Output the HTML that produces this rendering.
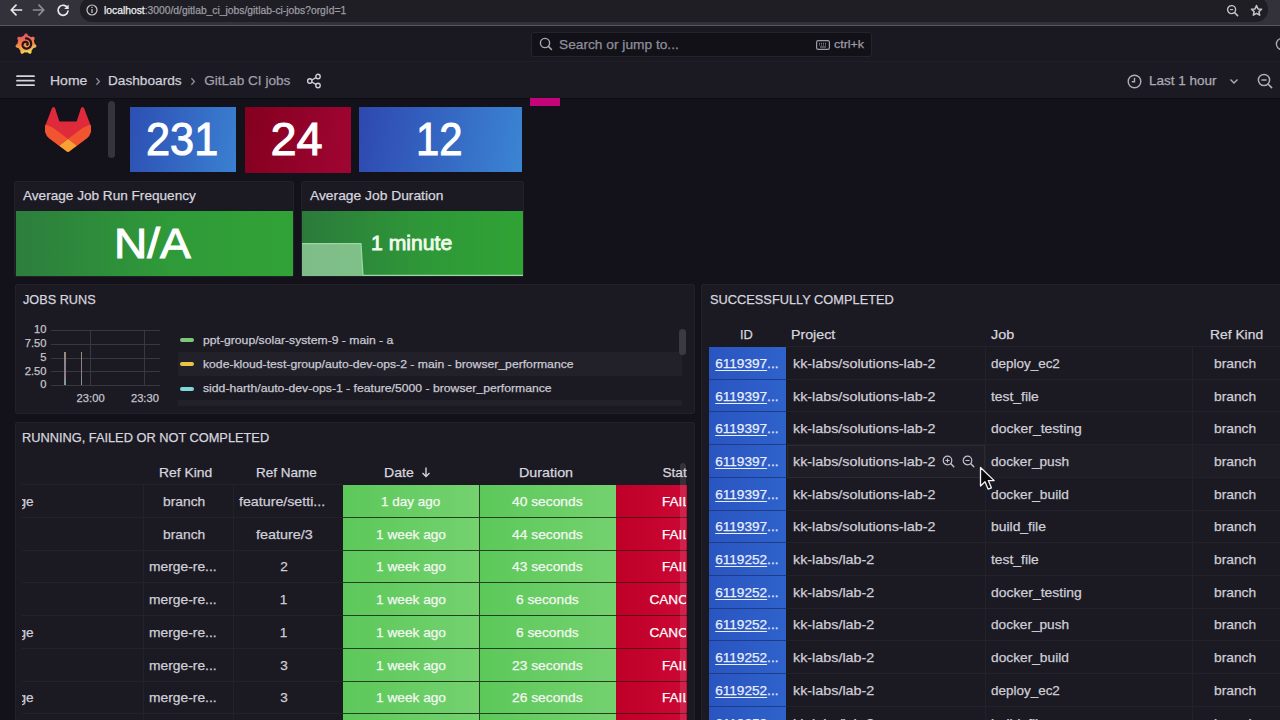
<!DOCTYPE html>
<html><head><meta charset="utf-8"><style>
html,body{margin:0;padding:0;width:1280px;height:720px;overflow:hidden;background:#13121a;font-family:"Liberation Sans", sans-serif}
div,svg{position:absolute}
.t{white-space:pre;-webkit-text-stroke:0.25px currentColor}
.t span{position:static}
</style></head><body>
<div style="left:0.00px;top:0.00px;width:1280px;height:25px;background:#33323a"></div>
<div style="left:0.00px;top:25.00px;width:1280px;height:1px;background:#58575f"></div>
<div style="left:80.00px;top:-3.00px;width:1188px;height:25px;background:#1f1e24;border-radius:12px"></div>
<svg style="left:9.00px;top:3.00px" width="14" height="14" viewBox="0 0 14 14"><path d="M12.5 7H2.5M7 2.2L2.2 7L7 11.8" stroke="#e8e8ea" stroke-width="1.7" fill="none" stroke-linecap="round" stroke-linejoin="round"/></svg>
<svg style="left:32.00px;top:3.00px" width="14" height="14" viewBox="0 0 14 14"><path d="M1.5 7H11.5M7 2.2L11.8 7L7 11.8" stroke="#8e8d95" stroke-width="1.7" fill="none" stroke-linecap="round" stroke-linejoin="round"/></svg>
<svg style="left:56.00px;top:3.00px" width="14" height="14" viewBox="0 0 14 14"><path d="M11.6 5.2A5 5 0 1 0 12 8" stroke="#e8e8ea" stroke-width="1.7" fill="none" stroke-linecap="round"/><path d="M12.6 1.6V6H8.2Z" fill="#e8e8ea"/></svg>
<svg style="left:86.00px;top:4.00px" width="12" height="12" viewBox="0 0 12 12"><circle cx="6" cy="6" r="5" stroke="#c8c8cc" stroke-width="1.2" fill="none"/><rect x="5.4" y="5" width="1.2" height="4" fill="#c8c8cc"/><rect x="5.4" y="2.8" width="1.2" height="1.2" fill="#c8c8cc"/></svg>
<div class="t" style="left:103.60px;top:3.38px;font-size:10.6px;line-height:14.84px;color:#9d9ca4;"><span style="display:inline-block;transform:scaleX(0.9734);transform-origin:0 50%"><span style="color:#f0f0f2">localhost</span>:3000/d/gitlab_ci_jobs/gitlab-ci-jobs?orgId=1</span></div>
<svg style="left:1226.00px;top:4.00px" width="14" height="14" viewBox="0 0 14 14"><circle cx="5.6" cy="5.6" r="4" stroke="#c4c4c8" stroke-width="1.4" fill="none"/><path d="M8.5 8.5L11.6 11.6" stroke="#c4c4c8" stroke-width="1.6" stroke-linecap="round"/><path d="M4 5.6H7.2" stroke="#c4c4c8" stroke-width="1.1"/></svg>
<svg style="left:1250.00px;top:4.00px" width="13" height="13" viewBox="0 0 13 13"><path d="M6.5 1.5L8 4.9L11.6 5.2L8.9 7.6L9.7 11.2L6.5 9.3L3.3 11.2L4.1 7.6L1.4 5.2L5 4.9Z" stroke="#c4c4c8" stroke-width="1.5" fill="none" stroke-linejoin="round"/></svg>
<div style="left:0.00px;top:26.00px;width:1280px;height:35px;background:#1a1921"></div>
<div style="left:0.00px;top:61.00px;width:1280px;height:1px;background:#211f29"></div>
<svg style="left:14.00px;top:32.00px" width="24" height="24" viewBox="0 0 24 24"><defs><linearGradient id="gg" x1="0.2" y1="0" x2="0.45" y2="1"><stop offset="0" stop-color="#e2456a"/><stop offset="0.5" stop-color="#f0804a"/><stop offset="1" stop-color="#f4d658"/></linearGradient></defs>
<path fill="url(#gg)" d="M21.00 12.00L21.52 12.43L21.96 12.90L22.28 13.39L22.45 13.90L22.43 14.38L22.23 14.82L21.87 15.21L21.36 15.51L20.76 15.74L20.11 15.90L19.48 16.02L19.29 16.35L19.09 16.68L18.87 16.99L18.64 17.29L18.39 17.59L18.14 17.87L17.87 18.14L17.59 18.39L17.61 19.04L17.60 19.71L17.51 20.35L17.32 20.91L17.03 21.35L16.64 21.64L16.17 21.76L15.65 21.71L15.09 21.51L14.53 21.18L14.00 20.77L13.52 20.35L13.14 20.41L12.76 20.46L12.38 20.48L12.00 20.49L11.62 20.48L11.24 20.46L10.86 20.41L10.48 20.35L10.00 20.77L9.47 21.18L8.91 21.51L8.35 21.71L7.83 21.76L7.36 21.64L6.97 21.35L6.68 20.91L6.49 20.35L6.40 19.71L6.39 19.04L6.41 18.39L6.13 18.14L5.86 17.87L5.61 17.59L5.36 17.29L5.13 16.99L4.91 16.68L4.71 16.35L4.52 16.02L3.89 15.90L3.24 15.74L2.64 15.51L2.13 15.21L1.77 14.82L1.57 14.38L1.55 13.90L1.72 13.39L2.04 12.90L2.48 12.43L3.00 12.00L3.52 11.62L3.54 11.24L3.59 10.86L3.65 10.48L3.72 10.11L3.82 9.74L3.93 9.38L4.05 9.02L4.19 8.66L3.89 8.10L3.61 7.49L3.42 6.87L3.34 6.28L3.41 5.76L3.63 5.33L4.00 5.01L4.50 4.83L5.09 4.77L5.73 4.83L6.39 4.96L7.01 5.13L7.32 4.91L7.65 4.71L7.98 4.52L8.32 4.35L8.66 4.19L9.02 4.05L9.38 3.93L9.74 3.82L10.00 3.23L10.30 2.63L10.66 2.09L11.07 1.67L11.52 1.39L12.00 1.30L12.48 1.39L12.93 1.67L13.34 2.09L13.70 2.63L14.00 3.23L14.26 3.82L14.62 3.93L14.98 4.05L15.34 4.19L15.68 4.35L16.02 4.52L16.35 4.71L16.68 4.91L16.99 5.13L17.61 4.96L18.27 4.83L18.91 4.77L19.50 4.83L20.00 5.01L20.37 5.33L20.59 5.76L20.66 6.28L20.58 6.87L20.39 7.49L20.11 8.10L19.81 8.66L19.95 9.02L20.07 9.38L20.18 9.74L20.28 10.11L20.35 10.48L20.41 10.86L20.46 11.24L20.48 11.62Z"/><path d="M12.00 6.30L12.61 6.39L13.19 6.54L13.76 6.74L14.29 7.00L14.79 7.32L15.25 7.67L15.67 8.07L16.04 8.51L16.36 8.97L16.63 9.47L16.84 9.98L17.00 10.50L17.10 11.03L17.14 11.57L17.13 12.10L17.07 12.62L16.95 13.12L16.79 13.61L16.58 14.07L16.32 14.50L16.03 14.90L15.70 15.26L15.33 15.58L14.94 15.86L14.53 16.09L14.11 16.28L13.67 16.42L13.22 16.52L12.78 16.56L12.34 16.56L11.90 16.52L11.48 16.43L11.07 16.30L10.69 16.13L10.33 15.92L10.00 15.68L9.70 15.41L9.43 15.12L9.20 14.81L9.01 14.47L8.85 14.13L8.73 13.78L8.65 13.42L8.61 13.06L8.61 12.70L8.65 12.35L8.71 12.02L8.82 11.69L8.95 11.39L9.11 11.10L9.30 10.84L9.51 10.61L9.74 10.40L9.99 10.22L10.24 10.07L10.51 9.95L10.78 9.86L11.06 9.81L11.33 9.78L11.60 9.78L11.86 9.81L12.11 9.87L12.35 9.95L12.58 10.05L12.78 10.18L12.97 10.32L13.14 10.48L13.28 10.65L13.40 10.83L13.50 11.02L13.58 11.21L13.63 11.40L13.66 11.60L13.67 11.79L13.66 11.97L13.62 12.15L13.57 12.31L13.51 12.47L13.42 12.61L13.33 12.73" stroke="#2a1418" stroke-width="2.3" fill="none" stroke-linecap="round"/></svg>
<div style="left:531.00px;top:31.50px;width:340.5px;height:25.5px;background:#121118;border:1px solid #25242c;border-radius:3px;box-sizing:border-box"></div>
<svg style="left:539.00px;top:37.00px" width="14" height="14" viewBox="0 0 14 14"><circle cx="6" cy="6" r="4.6" stroke="#a8a7b2" stroke-width="1.4" fill="none"/><path d="M9.4 9.4L12.5 12.5" stroke="#a8a7b2" stroke-width="1.5" stroke-linecap="round"/></svg>
<div class="t" style="left:558.50px;top:34.83px;font-size:13.6px;line-height:19.04px;color:#8f8e9a;"><span style="display:inline-block;transform:scaleX(1.0098);transform-origin:0 50%">Search or jump to...</span></div>
<svg style="left:816.00px;top:39.50px" width="14" height="10" viewBox="0 0 14 10"><rect x="0.6" y="0.6" width="12.8" height="8.8" rx="1.6" stroke="#9c9ba7" stroke-width="1.2" fill="none"/><path d="M3 3.3h1M5 3.3h1M7 3.3h1M9 3.3h1M3 5h1M5 5h1M7 5h1M9 5h1M4 7h6" stroke="#9c9ba7" stroke-width="0.9"/></svg>
<div class="t" style="left:833.80px;top:36.40px;font-size:11.5px;line-height:16.1px;color:#9c9ba7;"><span style="display:inline-block;transform:scaleX(1.0804);transform-origin:0 50%">ctrl+k</span></div>
<svg style="left:1275.00px;top:37.00px" width="14" height="14" viewBox="0 0 14 14"><circle cx="7" cy="7" r="5.6" stroke="#a9a8b3" stroke-width="1.4" fill="none"/></svg>
<div style="left:0.00px;top:62.00px;width:1280px;height:36px;background:#1b1a22"></div>
<div style="left:0.00px;top:98.00px;width:1280px;height:1px;background:#0e0d13"></div>
<svg style="left:16.00px;top:75.00px" width="19" height="12" viewBox="0 0 19 12"><path d="M1 1.2H18M1 5.7H18M1 10.2H18" stroke="#d4d3dc" stroke-width="1.8" stroke-linecap="round"/></svg>
<div class="t" style="left:49.97px;top:71.28px;font-size:13.6px;line-height:19.04px;color:#d0cfd9;"><span style="display:inline-block;transform:scaleX(1.0288);transform-origin:0 50%">Home</span></div>
<svg style="left:95.00px;top:76.50px" width="6" height="9" viewBox="0 0 6 9"><path d="M1.4 1.2L4.4 4.5L1.4 7.8" stroke="#8e8d99" stroke-width="1.3" fill="none"/></svg>
<div class="t" style="left:108.00px;top:71.28px;font-size:13.6px;line-height:19.04px;color:#d0cfd9;"><span style="display:inline-block;transform:scaleX(1.0041);transform-origin:0 50%">Dashboards</span></div>
<svg style="left:190.40px;top:76.50px" width="6" height="9" viewBox="0 0 6 9"><path d="M1.4 1.2L4.4 4.5L1.4 7.8" stroke="#8e8d99" stroke-width="1.3" fill="none"/></svg>
<div class="t" style="left:204.20px;top:71.28px;font-size:13.6px;line-height:19.04px;color:#a09fab;">GitLab CI jobs</div>
<svg style="left:305.50px;top:72.50px" width="16" height="16" viewBox="0 0 16 16"><circle cx="12" cy="3.5" r="2.2" stroke="#d0cfd9" stroke-width="1.4" fill="none"/><circle cx="3.8" cy="8" r="2.2" stroke="#d0cfd9" stroke-width="1.4" fill="none"/><circle cx="12" cy="12.5" r="2.2" stroke="#d0cfd9" stroke-width="1.4" fill="none"/><path d="M5.8 7L10 4.6M5.8 9L10 11.4" stroke="#d0cfd9" stroke-width="1.4"/></svg>
<svg style="left:1126.50px;top:73.50px" width="15" height="15" viewBox="0 0 15 15"><circle cx="7.5" cy="7.5" r="6.3" stroke="#aeadb8" stroke-width="1.4" fill="none"/><path d="M7.5 3.8V7.8H4.8" stroke="#aeadb8" stroke-width="1.4" fill="none"/></svg>
<div class="t" style="left:1148.81px;top:71.23px;font-size:13.6px;line-height:19.04px;color:#acabb7;"><span style="display:inline-block;transform:scaleX(0.9942);transform-origin:0 50%">Last 1 hour</span></div>
<svg style="left:1229.00px;top:77.50px" width="10" height="7" viewBox="0 0 10 7"><path d="M1.5 1.5L5 5L8.5 1.5" stroke="#aeadb8" stroke-width="1.4" fill="none"/></svg>
<svg style="left:1256.50px;top:72.50px" width="16" height="16" viewBox="0 0 16 16"><circle cx="7" cy="7" r="5.6" stroke="#aeadb8" stroke-width="1.5" fill="none"/><path d="M11.2 11.2L14.6 14.6" stroke="#aeadb8" stroke-width="1.6" stroke-linecap="round"/><path d="M4.4 7H9.6" stroke="#aeadb8" stroke-width="1.5"/></svg>
<div style="left:0.00px;top:99.00px;width:1280px;height:621px;background:#13121a"></div>
<svg style="left:45.00px;top:107.00px" width="46" height="45" viewBox="95 97 190 186"><path fill="#de2a3a" d="M282.83,170.73l-.27-.69-26.14-68.22a6.81,6.81,0,0,0-2.69-3.24,7,7,0,0,0-8,.43,7,7,0,0,0-2.32,3.52l-17.65,54H154.29l-17.65-54A6.86,6.86,0,0,0,134.32,99a7,7,0,0,0-8-.43,6.87,6.87,0,0,0-2.69,3.24L97.44,170l-.26.69a48.54,48.54,0,0,0,16.1,56.1l.09.07.24.17,39.82,29.82,19.7,14.91,12,9.06a8.07,8.07,0,0,0,9.76,0l12-9.06,19.7-14.91,40.06-30,.1-.08A48.56,48.56,0,0,0,282.83,170.73Z"/>
<path fill="#f05530" d="M282.83,170.73l-.27-.69a88.3,88.3,0,0,0-35.15,15.8L190,229.25c19.55,14.79,36.57,27.64,36.57,27.64l40.06-30,.1-.08A48.56,48.56,0,0,0,282.83,170.73Z"/>
<path fill="#f6a234" d="M153.43,256.89l19.7,14.91,12,9.06a8.07,8.07,0,0,0,9.76,0l12-9.06,19.7-14.91S209.55,244,190,229.25C170.45,244,153.43,256.89,153.43,256.89Z"/>
<path fill="#f05530" d="M132.58,185.84A88.19,88.19,0,0,0,97.44,170l-.26.69a48.54,48.54,0,0,0,16.1,56.1l.09.07.24.17,39.82,29.82s17-12.85,36.57-27.64Z"/></svg>
<div style="left:108.00px;top:100.50px;width:7px;height:57px;background:#35343c;border-radius:4px"></div>
<div style="left:130.00px;top:107.00px;width:106px;height:65px;background:linear-gradient(100deg,#2d4fb3,#3a80d2)"></div>
<div class="t" style="left:145.76px;top:105.90px;font-size:47px;line-height:65.8px;color:#ffffff;-webkit-text-stroke:1px #fff"><span style="display:inline-block;transform:scaleX(0.9209);transform-origin:0 50%">231</span></div>
<div style="left:244.50px;top:106.50px;width:106px;height:66px;background:linear-gradient(100deg,#84001f,#a00532)"></div>
<div class="t" style="left:270.45px;top:105.50px;font-size:47px;line-height:65.8px;color:#ffffff;-webkit-text-stroke:1px #fff">24</div>
<div style="left:359.30px;top:107.00px;width:162.7px;height:65px;background:linear-gradient(100deg,#2e48b0,#3b85d4)"></div>
<div class="t" style="left:416.43px;top:105.90px;font-size:47px;line-height:65.8px;color:#ffffff;-webkit-text-stroke:1px #fff"><span style="display:inline-block;transform:scaleX(0.8910);transform-origin:0 50%">12</span></div>
<div style="left:530.40px;top:98.30px;width:30px;height:7.5px;background:#c5047a"></div>
<div style="left:14.00px;top:181.00px;width:280px;height:96px;background:#1b1a22;border:1px solid #22212a;box-sizing:border-box;border-radius:2px"></div>
<div class="t" style="left:23.00px;top:186.18px;font-size:13.6px;line-height:19.04px;color:#d6d5df;">Average Job Run Frequency</div>
<div style="left:15.50px;top:210.50px;width:277px;height:65.5px;background:linear-gradient(90deg,#2c7e3d,#2f9a39 55%,#31a336)"></div>
<div class="t" style="left:114.21px;top:214.50px;font-size:42px;line-height:58.8px;color:#ffffff;-webkit-text-stroke:1px #fff"><span style="display:inline-block;transform:scaleX(1.0970);transform-origin:0 50%">N/A</span></div>
<div style="left:300.70px;top:181.00px;width:223px;height:96px;background:#1b1a22;border:1px solid #22212a;box-sizing:border-box;border-radius:2px"></div>
<div class="t" style="left:309.50px;top:186.18px;font-size:13.6px;line-height:19.04px;color:#d6d5df;"><span style="display:inline-block;transform:scaleX(1.0162);transform-origin:0 50%">Average Job Duration</span></div>
<div style="left:301.50px;top:210.70px;width:221px;height:65.3px;background:linear-gradient(90deg,#2b7a3b,#2e9838 55%,#30a335)"></div>
<svg style="left:301.50px;top:210.70px" width="221" height="65.3" viewBox="0 0 221 65.3"><path d="M0 32.7H59L61 64.3H221V65.3H0Z" fill="#8ec997" fill-opacity="0.85"/><path d="M0 32.7H59L61 64.3H221" stroke="#9bd8a3" stroke-width="1.2" fill="none"/></svg>
<div class="t" style="left:370.97px;top:228.75px;font-size:20.5px;line-height:28.7px;color:#f0fbec;-webkit-text-stroke:0.8px #f0fbec"><span style="display:inline-block;transform:scaleX(1.0320);transform-origin:0 50%">1 minute</span></div>
<div style="left:14.60px;top:284.00px;width:680px;height:130px;background:#1b1a22;border:1px solid #22212a;box-sizing:border-box;border-radius:2px"></div>
<div class="t" style="left:23.00px;top:289.88px;font-size:13.6px;line-height:19.04px;color:#d6d5df;"><span style="display:inline-block;transform:scaleX(0.9340);transform-origin:0 50%">JOBS RUNS</span></div>
<div style="left:50.50px;top:330.10px;width:109px;height:1px;background:#393841"></div>
<div style="left:50.50px;top:344.10px;width:109px;height:1px;background:#393841"></div>
<div style="left:50.50px;top:357.50px;width:109px;height:1px;background:#393841"></div>
<div style="left:50.50px;top:371.00px;width:109px;height:1px;background:#393841"></div>
<div style="left:50.50px;top:384.70px;width:109px;height:1px;background:#393841"></div>
<div style="left:90.00px;top:331.00px;width:1px;height:54.5px;background:#393841"></div>
<div style="left:144.30px;top:331.00px;width:1px;height:54.5px;background:#393841"></div>
<div class="t" style="left:34.03px;top:322.41px;font-size:11.2px;line-height:15.68px;color:#c4c3cd;">10</div>
<div class="t" style="left:24.70px;top:336.26px;font-size:11.2px;line-height:15.68px;color:#c4c3cd;">7.50</div>
<div class="t" style="left:40.25px;top:350.16px;font-size:11.2px;line-height:15.68px;color:#c4c3cd;">5</div>
<div class="t" style="left:24.70px;top:363.66px;font-size:11.2px;line-height:15.68px;color:#c4c3cd;">2.50</div>
<div class="t" style="left:40.25px;top:377.26px;font-size:11.2px;line-height:15.68px;color:#c4c3cd;">0</div>
<div class="t" style="left:76.61px;top:390.66px;font-size:11.2px;line-height:15.68px;color:#c4c3cd;">23:00</div>
<div class="t" style="left:130.91px;top:390.66px;font-size:11.2px;line-height:15.68px;color:#c4c3cd;">23:30</div>
<div style="left:64.35px;top:352.00px;width:1.5px;height:33px;background:linear-gradient(180deg,#a08c78 0%,#85838f 40%,#957a88 70%,#7aa39c 100%)"></div>
<div style="left:80.95px;top:352.00px;width:1.5px;height:33px;background:linear-gradient(180deg,#a08c78 0%,#85838f 40%,#957a88 70%,#7aa39c 100%)"></div>
<div style="left:178.00px;top:351.90px;width:504px;height:24.2px;background:#22212a"></div>
<div style="left:178.00px;top:399.70px;width:504px;height:6.5px;background:#22212a"></div>
<div style="left:679.00px;top:328.60px;width:7px;height:26.2px;background:#3b3a43;border-radius:4px"></div>
<div style="left:180.00px;top:338.00px;width:13.5px;height:4px;background:#7ec67a;border-radius:2px"></div>
<div class="t" style="left:202.80px;top:331.64px;font-size:11.8px;line-height:16.52px;color:#cac9d4;"><span style="display:inline-block;transform:scaleX(1.0332);transform-origin:0 50%">ppt-group/solar-system-9 - main - a</span></div>
<div style="left:180.00px;top:362.20px;width:13.5px;height:4px;background:#e8c547;border-radius:2px"></div>
<div class="t" style="left:202.80px;top:355.84px;font-size:11.8px;line-height:16.52px;color:#cac9d4;"><span style="display:inline-block;transform:scaleX(1.0331);transform-origin:0 50%">kode-kloud-test-group/auto-dev-ops-2 - main - browser_performance</span></div>
<div style="left:180.00px;top:386.75px;width:13.5px;height:4px;background:#7ed8d8;border-radius:2px"></div>
<div class="t" style="left:202.80px;top:380.39px;font-size:11.8px;line-height:16.52px;color:#cac9d4;"><span style="display:inline-block;transform:scaleX(1.0344);transform-origin:0 50%">sidd-harth/auto-dev-ops-1 - feature/5000 - browser_performance</span></div>
<div style="left:15.00px;top:421.50px;width:680px;height:310px;background:#1b1a22;border:1px solid #22212a;box-sizing:border-box;border-radius:2px"></div>
<div class="t" style="left:21.76px;top:428.33px;font-size:13.6px;line-height:19.04px;color:#d6d5df;"><span style="display:inline-block;transform:scaleX(0.9411);transform-origin:0 50%">RUNNING, FAILED OR NOT COMPLETED</span></div>
<div class="t" style="left:159.48px;top:463.18px;font-size:13.6px;line-height:19.04px;color:#d6d5df;"><span style="display:inline-block;transform:scaleX(1.0202);transform-origin:0 50%">Ref Kind</span></div>
<div class="t" style="left:255.61px;top:463.18px;font-size:13.6px;line-height:19.04px;color:#d6d5df;"><span style="display:inline-block;transform:scaleX(0.9944);transform-origin:0 50%">Ref Name</span></div>
<div class="t" style="left:384.46px;top:463.18px;font-size:13.6px;line-height:19.04px;color:#d6d5df;"><span style="display:inline-block;transform:scaleX(1.0385);transform-origin:0 50%">Date</span></div>
<svg style="left:421.00px;top:466.00px" width="10" height="12" viewBox="0 0 10 12"><path d="M5 1.5V10.5M1.5 7L5 10.5L8.5 7" stroke="#d4d3dd" stroke-width="1.4" fill="none"/></svg>
<div class="t" style="left:518.85px;top:463.18px;font-size:13.6px;line-height:19.04px;color:#d6d5df;"><span style="display:inline-block;transform:scaleX(1.0518);transform-origin:0 50%">Duration</span></div>
<div style="left:616.00px;top:421.50px;width:70.5px;height:300px;overflow:hidden">
<div class="t" style="left:46.50px;top:41.68px;font-size:13.6px;line-height:19.04px;color:#d6d5df;">Status</div>
</div>
<div style="left:22.00px;top:484.00px;width:321px;height:1px;background:#23222a"></div>
<div style="left:22.00px;top:517.00px;width:321px;height:1px;background:#23222a"></div>
<div style="left:343.00px;top:485.00px;width:137px;height:33px;background:linear-gradient(90deg,#5cc85a,#74d26f);border-bottom:1px solid #23401f;border-right:1px solid #23401f;box-sizing:border-box"></div>
<div style="left:480.00px;top:485.00px;width:136px;height:33px;background:linear-gradient(90deg,#5cc85a,#74d26f);border-bottom:1px solid #23401f;box-sizing:border-box"></div>
<div style="left:616.00px;top:485.00px;width:71px;height:33px;background:linear-gradient(90deg,#be0028,#cc0834);border-bottom:1px solid #5a0a18;box-sizing:border-box"></div>
<div style="left:22.00px;top:485.30px;width:30px;height:32.7px;overflow:hidden">
<div class="t" style="left:-11.12px;top:6.73px;font-size:13.6px;line-height:19.04px;color:#cfced8;">age</div>
</div>
<div class="t" style="left:163.20px;top:492.03px;font-size:13.6px;line-height:19.04px;color:#cfced8;"><span style="display:inline-block;transform:scaleX(1.0170);transform-origin:0 50%">branch</span></div>
<div class="t" style="left:238.50px;top:492.03px;font-size:13.6px;line-height:19.04px;color:#cfced8;"><span style="display:inline-block;transform:scaleX(1.0468);transform-origin:0 50%">feature/setti...</span></div>
<div class="t" style="left:381.41px;top:492.03px;font-size:13.6px;line-height:19.04px;color:#f4f8f2;"><span style="display:inline-block;transform:scaleX(0.9905);transform-origin:0 50%">1 day ago</span></div>
<div class="t" style="left:512.10px;top:492.03px;font-size:13.6px;line-height:19.04px;color:#f4f8f2;"><span style="display:inline-block;transform:scaleX(1.0153);transform-origin:0 50%">40 seconds</span></div>
<div style="left:615.80px;top:485.30px;width:70.5px;height:32.7px;overflow:hidden">
<div class="t" style="left:46.20px;top:6.73px;font-size:13.6px;line-height:19.04px;color:#ffffff;">FAILED</div>
</div>
<div style="left:22.00px;top:550.00px;width:321px;height:1px;background:#23222a"></div>
<div style="left:343.00px;top:518.00px;width:137px;height:33px;background:linear-gradient(90deg,#5cc85a,#74d26f);border-bottom:1px solid #23401f;border-right:1px solid #23401f;box-sizing:border-box"></div>
<div style="left:480.00px;top:518.00px;width:136px;height:33px;background:linear-gradient(90deg,#5cc85a,#74d26f);border-bottom:1px solid #23401f;box-sizing:border-box"></div>
<div style="left:616.00px;top:518.00px;width:71px;height:33px;background:linear-gradient(90deg,#be0028,#cc0834);border-bottom:1px solid #5a0a18;box-sizing:border-box"></div>
<div class="t" style="left:163.20px;top:524.73px;font-size:13.6px;line-height:19.04px;color:#cfced8;"><span style="display:inline-block;transform:scaleX(1.0170);transform-origin:0 50%">branch</span></div>
<div class="t" style="left:256.15px;top:524.73px;font-size:13.6px;line-height:19.04px;color:#cfced8;"><span style="display:inline-block;transform:scaleX(1.0565);transform-origin:0 50%">feature/3</span></div>
<div class="t" style="left:375.99px;top:524.73px;font-size:13.6px;line-height:19.04px;color:#f4f8f2;"><span style="display:inline-block;transform:scaleX(1.0064);transform-origin:0 50%">1 week ago</span></div>
<div class="t" style="left:512.00px;top:524.73px;font-size:13.6px;line-height:19.04px;color:#f4f8f2;"><span style="display:inline-block;transform:scaleX(1.0182);transform-origin:0 50%">44 seconds</span></div>
<div style="left:615.80px;top:518.00px;width:70.5px;height:32.7px;overflow:hidden">
<div class="t" style="left:46.20px;top:6.73px;font-size:13.6px;line-height:19.04px;color:#ffffff;">FAILED</div>
</div>
<div style="left:22.00px;top:582.00px;width:321px;height:1px;background:#23222a"></div>
<div style="left:343.00px;top:551.00px;width:137px;height:32px;background:linear-gradient(90deg,#5cc85a,#74d26f);border-bottom:1px solid #23401f;border-right:1px solid #23401f;box-sizing:border-box"></div>
<div style="left:480.00px;top:551.00px;width:136px;height:32px;background:linear-gradient(90deg,#5cc85a,#74d26f);border-bottom:1px solid #23401f;box-sizing:border-box"></div>
<div style="left:616.00px;top:551.00px;width:71px;height:32px;background:linear-gradient(90deg,#be0028,#cc0834);border-bottom:1px solid #5a0a18;box-sizing:border-box"></div>
<div class="t" style="left:149.30px;top:557.43px;font-size:13.6px;line-height:19.04px;color:#cfced8;"><span style="display:inline-block;transform:scaleX(1.0168);transform-origin:0 50%">merge-re...</span></div>
<div class="t" style="left:280.20px;top:557.43px;font-size:13.6px;line-height:19.04px;color:#cfced8;">2</div>
<div class="t" style="left:375.99px;top:557.43px;font-size:13.6px;line-height:19.04px;color:#f4f8f2;"><span style="display:inline-block;transform:scaleX(1.0064);transform-origin:0 50%">1 week ago</span></div>
<div class="t" style="left:512.10px;top:557.43px;font-size:13.6px;line-height:19.04px;color:#f4f8f2;"><span style="display:inline-block;transform:scaleX(1.0153);transform-origin:0 50%">43 seconds</span></div>
<div style="left:615.80px;top:550.70px;width:70.5px;height:32.7px;overflow:hidden">
<div class="t" style="left:46.20px;top:6.73px;font-size:13.6px;line-height:19.04px;color:#ffffff;">FAILED</div>
</div>
<div style="left:22.00px;top:615.00px;width:321px;height:1px;background:#23222a"></div>
<div style="left:343.00px;top:583.00px;width:137px;height:33px;background:linear-gradient(90deg,#5cc85a,#74d26f);border-bottom:1px solid #23401f;border-right:1px solid #23401f;box-sizing:border-box"></div>
<div style="left:480.00px;top:583.00px;width:136px;height:33px;background:linear-gradient(90deg,#5cc85a,#74d26f);border-bottom:1px solid #23401f;box-sizing:border-box"></div>
<div style="left:616.00px;top:583.00px;width:71px;height:33px;background:linear-gradient(90deg,#be0028,#cc0834);border-bottom:1px solid #5a0a18;box-sizing:border-box"></div>
<div class="t" style="left:149.30px;top:590.13px;font-size:13.6px;line-height:19.04px;color:#cfced8;"><span style="display:inline-block;transform:scaleX(1.0168);transform-origin:0 50%">merge-re...</span></div>
<div class="t" style="left:279.70px;top:590.13px;font-size:13.6px;line-height:19.04px;color:#cfced8;">1</div>
<div class="t" style="left:375.99px;top:590.13px;font-size:13.6px;line-height:19.04px;color:#f4f8f2;"><span style="display:inline-block;transform:scaleX(1.0064);transform-origin:0 50%">1 week ago</span></div>
<div class="t" style="left:516.05px;top:590.13px;font-size:13.6px;line-height:19.04px;color:#f4f8f2;"><span style="display:inline-block;transform:scaleX(1.0117);transform-origin:0 50%">6 seconds</span></div>
<div style="left:615.80px;top:583.40px;width:70.5px;height:32.7px;overflow:hidden">
<div class="t" style="left:33.70px;top:6.73px;font-size:13.6px;line-height:19.04px;color:#ffffff;">CANCELED</div>
</div>
<div style="left:22.00px;top:648.00px;width:321px;height:1px;background:#23222a"></div>
<div style="left:343.00px;top:616.00px;width:137px;height:33px;background:linear-gradient(90deg,#5cc85a,#74d26f);border-bottom:1px solid #23401f;border-right:1px solid #23401f;box-sizing:border-box"></div>
<div style="left:480.00px;top:616.00px;width:136px;height:33px;background:linear-gradient(90deg,#5cc85a,#74d26f);border-bottom:1px solid #23401f;box-sizing:border-box"></div>
<div style="left:616.00px;top:616.00px;width:71px;height:33px;background:linear-gradient(90deg,#be0028,#cc0834);border-bottom:1px solid #5a0a18;box-sizing:border-box"></div>
<div style="left:22.00px;top:616.10px;width:30px;height:32.7px;overflow:hidden">
<div class="t" style="left:-11.12px;top:6.73px;font-size:13.6px;line-height:19.04px;color:#cfced8;">age</div>
</div>
<div class="t" style="left:149.30px;top:622.83px;font-size:13.6px;line-height:19.04px;color:#cfced8;"><span style="display:inline-block;transform:scaleX(1.0168);transform-origin:0 50%">merge-re...</span></div>
<div class="t" style="left:279.70px;top:622.83px;font-size:13.6px;line-height:19.04px;color:#cfced8;">1</div>
<div class="t" style="left:375.99px;top:622.83px;font-size:13.6px;line-height:19.04px;color:#f4f8f2;"><span style="display:inline-block;transform:scaleX(1.0064);transform-origin:0 50%">1 week ago</span></div>
<div class="t" style="left:516.05px;top:622.83px;font-size:13.6px;line-height:19.04px;color:#f4f8f2;"><span style="display:inline-block;transform:scaleX(1.0117);transform-origin:0 50%">6 seconds</span></div>
<div style="left:615.80px;top:616.10px;width:70.5px;height:32.7px;overflow:hidden">
<div class="t" style="left:33.70px;top:6.73px;font-size:13.6px;line-height:19.04px;color:#ffffff;">CANCELED</div>
</div>
<div style="left:22.00px;top:681.00px;width:321px;height:1px;background:#23222a"></div>
<div style="left:343.00px;top:649.00px;width:137px;height:33px;background:linear-gradient(90deg,#5cc85a,#74d26f);border-bottom:1px solid #23401f;border-right:1px solid #23401f;box-sizing:border-box"></div>
<div style="left:480.00px;top:649.00px;width:136px;height:33px;background:linear-gradient(90deg,#5cc85a,#74d26f);border-bottom:1px solid #23401f;box-sizing:border-box"></div>
<div style="left:616.00px;top:649.00px;width:71px;height:33px;background:linear-gradient(90deg,#be0028,#cc0834);border-bottom:1px solid #5a0a18;box-sizing:border-box"></div>
<div class="t" style="left:149.30px;top:655.53px;font-size:13.6px;line-height:19.04px;color:#cfced8;"><span style="display:inline-block;transform:scaleX(1.0168);transform-origin:0 50%">merge-re...</span></div>
<div class="t" style="left:280.20px;top:655.53px;font-size:13.6px;line-height:19.04px;color:#cfced8;">3</div>
<div class="t" style="left:375.99px;top:655.53px;font-size:13.6px;line-height:19.04px;color:#f4f8f2;"><span style="display:inline-block;transform:scaleX(1.0064);transform-origin:0 50%">1 week ago</span></div>
<div class="t" style="left:512.10px;top:655.53px;font-size:13.6px;line-height:19.04px;color:#f4f8f2;"><span style="display:inline-block;transform:scaleX(1.0153);transform-origin:0 50%">23 seconds</span></div>
<div style="left:615.80px;top:648.80px;width:70.5px;height:32.7px;overflow:hidden">
<div class="t" style="left:46.20px;top:6.73px;font-size:13.6px;line-height:19.04px;color:#ffffff;">FAILED</div>
</div>
<div style="left:22.00px;top:713.00px;width:321px;height:1px;background:#23222a"></div>
<div style="left:343.00px;top:682.00px;width:137px;height:32px;background:linear-gradient(90deg,#5cc85a,#74d26f);border-bottom:1px solid #23401f;border-right:1px solid #23401f;box-sizing:border-box"></div>
<div style="left:480.00px;top:682.00px;width:136px;height:32px;background:linear-gradient(90deg,#5cc85a,#74d26f);border-bottom:1px solid #23401f;box-sizing:border-box"></div>
<div style="left:616.00px;top:682.00px;width:71px;height:32px;background:linear-gradient(90deg,#be0028,#cc0834);border-bottom:1px solid #5a0a18;box-sizing:border-box"></div>
<div style="left:22.00px;top:681.50px;width:30px;height:32.7px;overflow:hidden">
<div class="t" style="left:-11.12px;top:6.73px;font-size:13.6px;line-height:19.04px;color:#cfced8;">age</div>
</div>
<div class="t" style="left:149.30px;top:688.23px;font-size:13.6px;line-height:19.04px;color:#cfced8;"><span style="display:inline-block;transform:scaleX(1.0168);transform-origin:0 50%">merge-re...</span></div>
<div class="t" style="left:280.20px;top:688.23px;font-size:13.6px;line-height:19.04px;color:#cfced8;">3</div>
<div class="t" style="left:375.99px;top:688.23px;font-size:13.6px;line-height:19.04px;color:#f4f8f2;"><span style="display:inline-block;transform:scaleX(1.0064);transform-origin:0 50%">1 week ago</span></div>
<div class="t" style="left:512.10px;top:688.23px;font-size:13.6px;line-height:19.04px;color:#f4f8f2;"><span style="display:inline-block;transform:scaleX(1.0153);transform-origin:0 50%">26 seconds</span></div>
<div style="left:615.80px;top:681.50px;width:70.5px;height:32.7px;overflow:hidden">
<div class="t" style="left:46.20px;top:6.73px;font-size:13.6px;line-height:19.04px;color:#ffffff;">FAILED</div>
</div>
<div style="left:22.00px;top:746.00px;width:321px;height:1px;background:#23222a"></div>
<div style="left:343.00px;top:714.00px;width:137px;height:33px;background:linear-gradient(90deg,#5cc85a,#74d26f);border-bottom:1px solid #23401f;border-right:1px solid #23401f;box-sizing:border-box"></div>
<div style="left:480.00px;top:714.00px;width:136px;height:33px;background:linear-gradient(90deg,#5cc85a,#74d26f);border-bottom:1px solid #23401f;box-sizing:border-box"></div>
<div style="left:616.00px;top:714.00px;width:71px;height:33px;background:linear-gradient(90deg,#be0028,#cc0834);border-bottom:1px solid #5a0a18;box-sizing:border-box"></div>
<div class="t" style="left:149.30px;top:720.93px;font-size:13.6px;line-height:19.04px;color:#cfced8;"><span style="display:inline-block;transform:scaleX(1.0168);transform-origin:0 50%">merge-re...</span></div>
<div class="t" style="left:280.20px;top:720.93px;font-size:13.6px;line-height:19.04px;color:#cfced8;">3</div>
<div class="t" style="left:375.99px;top:720.93px;font-size:13.6px;line-height:19.04px;color:#f4f8f2;"><span style="display:inline-block;transform:scaleX(1.0064);transform-origin:0 50%">1 week ago</span></div>
<div class="t" style="left:512.10px;top:720.93px;font-size:13.6px;line-height:19.04px;color:#f4f8f2;"><span style="display:inline-block;transform:scaleX(1.0153);transform-origin:0 50%">26 seconds</span></div>
<div style="left:615.80px;top:714.20px;width:70.5px;height:32.7px;overflow:hidden">
<div class="t" style="left:46.20px;top:6.73px;font-size:13.6px;line-height:19.04px;color:#ffffff;">FAILED</div>
</div>
<div style="left:143.40px;top:485.30px;width:1px;height:240px;background:#23222a"></div>
<div style="left:232.50px;top:485.30px;width:1px;height:240px;background:#23222a"></div>
<div style="left:680.20px;top:462.50px;width:6.3px;height:260px;background:rgba(235,215,225,0.13);border-radius:3px"></div>
<div style="left:701.00px;top:283.60px;width:600px;height:450px;background:#1b1a22;border:1px solid #22212a;box-sizing:border-box;border-radius:2px"></div>
<div style="left:985.00px;top:445.00px;width:295px;height:32px;background:#1e1d25"></div>
<div class="t" style="left:709.80px;top:290.03px;font-size:13.6px;line-height:19.04px;color:#d6d5df;"><span style="display:inline-block;transform:scaleX(0.9418);transform-origin:0 50%">SUCCESSFULLY COMPLETED</span></div>
<div class="t" style="left:739.60px;top:325.08px;font-size:13.6px;line-height:19.04px;color:#d6d5df;"><span style="display:inline-block;transform:scaleX(0.9470);transform-origin:0 50%">ID</span></div>
<div class="t" style="left:791.46px;top:325.08px;font-size:13.6px;line-height:19.04px;color:#d6d5df;"><span style="display:inline-block;transform:scaleX(1.0450);transform-origin:0 50%">Project</span></div>
<div class="t" style="left:990.90px;top:325.08px;font-size:13.6px;line-height:19.04px;color:#d6d5df;"><span style="display:inline-block;transform:scaleX(1.0535);transform-origin:0 50%">Job</span></div>
<div class="t" style="left:1209.98px;top:325.08px;font-size:13.6px;line-height:19.04px;color:#d6d5df;"><span style="display:inline-block;transform:scaleX(1.0182);transform-origin:0 50%">Ref Kind</span></div>
<div style="left:786.00px;top:346.00px;width:494px;height:1px;background:#23222a"></div>
<div style="left:709.00px;top:347.00px;width:77px;height:33px;background:linear-gradient(90deg,#2a55c0,#2f62cb);border-bottom:1px solid #1d3d8a;box-sizing:border-box"></div>
<div style="left:786.00px;top:379.00px;width:494px;height:1px;background:#23222a"></div>
<div class="t" style="left:715.20px;top:353.83px;font-size:13.6px;line-height:19.04px;color:#e9eefc;"><span style="text-decoration:underline;text-underline-offset:2px;text-decoration-thickness:1px">6119397</span>...</div>
<div class="t" style="left:792.50px;top:353.83px;font-size:13.6px;line-height:19.04px;color:#cfced8;"><span style="display:inline-block;transform:scaleX(1.0529);transform-origin:0 50%">kk-labs/solutions-lab-2</span></div>
<div class="t" style="left:990.90px;top:353.83px;font-size:13.6px;line-height:19.04px;color:#cfced8;"><span style="display:inline-block;transform:scaleX(0.9902);transform-origin:0 50%">deploy_ec2</span></div>
<div class="t" style="left:1213.90px;top:353.83px;font-size:13.6px;line-height:19.04px;color:#cfced8;"><span style="display:inline-block;transform:scaleX(1.0145);transform-origin:0 50%">branch</span></div>
<div style="left:709.00px;top:380.00px;width:77px;height:32px;background:linear-gradient(90deg,#2a55c0,#2f62cb);border-bottom:1px solid #1d3d8a;box-sizing:border-box"></div>
<div style="left:786.00px;top:411.00px;width:494px;height:1px;background:#23222a"></div>
<div class="t" style="left:715.20px;top:386.53px;font-size:13.6px;line-height:19.04px;color:#e9eefc;"><span style="text-decoration:underline;text-underline-offset:2px;text-decoration-thickness:1px">6119397</span>...</div>
<div class="t" style="left:792.50px;top:386.53px;font-size:13.6px;line-height:19.04px;color:#cfced8;"><span style="display:inline-block;transform:scaleX(1.0529);transform-origin:0 50%">kk-labs/solutions-lab-2</span></div>
<div class="t" style="left:990.90px;top:386.53px;font-size:13.6px;line-height:19.04px;color:#cfced8;"><span style="display:inline-block;transform:scaleX(1.0197);transform-origin:0 50%">test_file</span></div>
<div class="t" style="left:1213.90px;top:386.53px;font-size:13.6px;line-height:19.04px;color:#cfced8;"><span style="display:inline-block;transform:scaleX(1.0145);transform-origin:0 50%">branch</span></div>
<div style="left:709.00px;top:412.00px;width:77px;height:33px;background:linear-gradient(90deg,#2a55c0,#2f62cb);border-bottom:1px solid #1d3d8a;box-sizing:border-box"></div>
<div style="left:786.00px;top:444.00px;width:494px;height:1px;background:#23222a"></div>
<div class="t" style="left:715.20px;top:419.23px;font-size:13.6px;line-height:19.04px;color:#e9eefc;"><span style="text-decoration:underline;text-underline-offset:2px;text-decoration-thickness:1px">6119397</span>...</div>
<div class="t" style="left:792.50px;top:419.23px;font-size:13.6px;line-height:19.04px;color:#cfced8;"><span style="display:inline-block;transform:scaleX(1.0529);transform-origin:0 50%">kk-labs/solutions-lab-2</span></div>
<div class="t" style="left:990.90px;top:419.23px;font-size:13.6px;line-height:19.04px;color:#cfced8;"><span style="display:inline-block;transform:scaleX(1.0267);transform-origin:0 50%">docker_testing</span></div>
<div class="t" style="left:1213.90px;top:419.23px;font-size:13.6px;line-height:19.04px;color:#cfced8;"><span style="display:inline-block;transform:scaleX(1.0145);transform-origin:0 50%">branch</span></div>
<div style="left:709.00px;top:445.00px;width:77px;height:33px;background:linear-gradient(90deg,#2a55c0,#2f62cb);border-bottom:1px solid #1d3d8a;box-sizing:border-box"></div>
<div style="left:786.00px;top:477.00px;width:494px;height:1px;background:#23222a"></div>
<div class="t" style="left:715.20px;top:451.93px;font-size:13.6px;line-height:19.04px;color:#e9eefc;"><span style="text-decoration:underline;text-underline-offset:2px;text-decoration-thickness:1px">6119397</span>...</div>
<div class="t" style="left:792.50px;top:451.93px;font-size:13.6px;line-height:19.04px;color:#cfced8;"><span style="display:inline-block;transform:scaleX(1.0529);transform-origin:0 50%">kk-labs/solutions-lab-2</span></div>
<div class="t" style="left:990.90px;top:451.93px;font-size:13.6px;line-height:19.04px;color:#cfced8;"><span style="display:inline-block;transform:scaleX(1.0029);transform-origin:0 50%">docker_push</span></div>
<div class="t" style="left:1213.90px;top:451.93px;font-size:13.6px;line-height:19.04px;color:#cfced8;"><span style="display:inline-block;transform:scaleX(1.0145);transform-origin:0 50%">branch</span></div>
<div style="left:709.00px;top:478.00px;width:77px;height:33px;background:linear-gradient(90deg,#2a55c0,#2f62cb);border-bottom:1px solid #1d3d8a;box-sizing:border-box"></div>
<div style="left:786.00px;top:510.00px;width:494px;height:1px;background:#23222a"></div>
<div class="t" style="left:715.20px;top:484.63px;font-size:13.6px;line-height:19.04px;color:#e9eefc;"><span style="text-decoration:underline;text-underline-offset:2px;text-decoration-thickness:1px">6119397</span>...</div>
<div class="t" style="left:792.50px;top:484.63px;font-size:13.6px;line-height:19.04px;color:#cfced8;"><span style="display:inline-block;transform:scaleX(1.0529);transform-origin:0 50%">kk-labs/solutions-lab-2</span></div>
<div class="t" style="left:990.90px;top:484.63px;font-size:13.6px;line-height:19.04px;color:#cfced8;"><span style="display:inline-block;transform:scaleX(1.0102);transform-origin:0 50%">docker_build</span></div>
<div class="t" style="left:1213.90px;top:484.63px;font-size:13.6px;line-height:19.04px;color:#cfced8;"><span style="display:inline-block;transform:scaleX(1.0145);transform-origin:0 50%">branch</span></div>
<div style="left:709.00px;top:511.00px;width:77px;height:32px;background:linear-gradient(90deg,#2a55c0,#2f62cb);border-bottom:1px solid #1d3d8a;box-sizing:border-box"></div>
<div style="left:786.00px;top:542.00px;width:494px;height:1px;background:#23222a"></div>
<div class="t" style="left:715.20px;top:517.33px;font-size:13.6px;line-height:19.04px;color:#e9eefc;"><span style="text-decoration:underline;text-underline-offset:2px;text-decoration-thickness:1px">6119397</span>...</div>
<div class="t" style="left:792.50px;top:517.33px;font-size:13.6px;line-height:19.04px;color:#cfced8;"><span style="display:inline-block;transform:scaleX(1.0529);transform-origin:0 50%">kk-labs/solutions-lab-2</span></div>
<div class="t" style="left:990.90px;top:517.33px;font-size:13.6px;line-height:19.04px;color:#cfced8;"><span style="display:inline-block;transform:scaleX(1.0226);transform-origin:0 50%">build_file</span></div>
<div class="t" style="left:1213.90px;top:517.33px;font-size:13.6px;line-height:19.04px;color:#cfced8;"><span style="display:inline-block;transform:scaleX(1.0145);transform-origin:0 50%">branch</span></div>
<div style="left:709.00px;top:543.00px;width:77px;height:33px;background:linear-gradient(90deg,#2a55c0,#2f62cb);border-bottom:1px solid #1d3d8a;box-sizing:border-box"></div>
<div style="left:786.00px;top:575.00px;width:494px;height:1px;background:#23222a"></div>
<div class="t" style="left:715.20px;top:550.03px;font-size:13.6px;line-height:19.04px;color:#e9eefc;"><span style="text-decoration:underline;text-underline-offset:2px;text-decoration-thickness:1px">6119252</span>...</div>
<div class="t" style="left:792.50px;top:550.03px;font-size:13.6px;line-height:19.04px;color:#cfced8;"><span style="display:inline-block;transform:scaleX(1.0549);transform-origin:0 50%">kk-labs/lab-2</span></div>
<div class="t" style="left:990.90px;top:550.03px;font-size:13.6px;line-height:19.04px;color:#cfced8;"><span style="display:inline-block;transform:scaleX(1.0197);transform-origin:0 50%">test_file</span></div>
<div class="t" style="left:1213.90px;top:550.03px;font-size:13.6px;line-height:19.04px;color:#cfced8;"><span style="display:inline-block;transform:scaleX(1.0145);transform-origin:0 50%">branch</span></div>
<div style="left:709.00px;top:576.00px;width:77px;height:33px;background:linear-gradient(90deg,#2a55c0,#2f62cb);border-bottom:1px solid #1d3d8a;box-sizing:border-box"></div>
<div style="left:786.00px;top:608.00px;width:494px;height:1px;background:#23222a"></div>
<div class="t" style="left:715.20px;top:582.73px;font-size:13.6px;line-height:19.04px;color:#e9eefc;"><span style="text-decoration:underline;text-underline-offset:2px;text-decoration-thickness:1px">6119252</span>...</div>
<div class="t" style="left:792.50px;top:582.73px;font-size:13.6px;line-height:19.04px;color:#cfced8;"><span style="display:inline-block;transform:scaleX(1.0549);transform-origin:0 50%">kk-labs/lab-2</span></div>
<div class="t" style="left:990.90px;top:582.73px;font-size:13.6px;line-height:19.04px;color:#cfced8;"><span style="display:inline-block;transform:scaleX(1.0267);transform-origin:0 50%">docker_testing</span></div>
<div class="t" style="left:1213.90px;top:582.73px;font-size:13.6px;line-height:19.04px;color:#cfced8;"><span style="display:inline-block;transform:scaleX(1.0145);transform-origin:0 50%">branch</span></div>
<div style="left:709.00px;top:609.00px;width:77px;height:32px;background:linear-gradient(90deg,#2a55c0,#2f62cb);border-bottom:1px solid #1d3d8a;box-sizing:border-box"></div>
<div style="left:786.00px;top:640.00px;width:494px;height:1px;background:#23222a"></div>
<div class="t" style="left:715.20px;top:615.43px;font-size:13.6px;line-height:19.04px;color:#e9eefc;"><span style="text-decoration:underline;text-underline-offset:2px;text-decoration-thickness:1px">6119252</span>...</div>
<div class="t" style="left:792.50px;top:615.43px;font-size:13.6px;line-height:19.04px;color:#cfced8;"><span style="display:inline-block;transform:scaleX(1.0549);transform-origin:0 50%">kk-labs/lab-2</span></div>
<div class="t" style="left:990.90px;top:615.43px;font-size:13.6px;line-height:19.04px;color:#cfced8;"><span style="display:inline-block;transform:scaleX(1.0029);transform-origin:0 50%">docker_push</span></div>
<div class="t" style="left:1213.90px;top:615.43px;font-size:13.6px;line-height:19.04px;color:#cfced8;"><span style="display:inline-block;transform:scaleX(1.0145);transform-origin:0 50%">branch</span></div>
<div style="left:709.00px;top:641.00px;width:77px;height:33px;background:linear-gradient(90deg,#2a55c0,#2f62cb);border-bottom:1px solid #1d3d8a;box-sizing:border-box"></div>
<div style="left:786.00px;top:673.00px;width:494px;height:1px;background:#23222a"></div>
<div class="t" style="left:715.20px;top:648.13px;font-size:13.6px;line-height:19.04px;color:#e9eefc;"><span style="text-decoration:underline;text-underline-offset:2px;text-decoration-thickness:1px">6119252</span>...</div>
<div class="t" style="left:792.50px;top:648.13px;font-size:13.6px;line-height:19.04px;color:#cfced8;"><span style="display:inline-block;transform:scaleX(1.0549);transform-origin:0 50%">kk-labs/lab-2</span></div>
<div class="t" style="left:990.90px;top:648.13px;font-size:13.6px;line-height:19.04px;color:#cfced8;"><span style="display:inline-block;transform:scaleX(1.0102);transform-origin:0 50%">docker_build</span></div>
<div class="t" style="left:1213.90px;top:648.13px;font-size:13.6px;line-height:19.04px;color:#cfced8;"><span style="display:inline-block;transform:scaleX(1.0145);transform-origin:0 50%">branch</span></div>
<div style="left:709.00px;top:674.00px;width:77px;height:33px;background:linear-gradient(90deg,#2a55c0,#2f62cb);border-bottom:1px solid #1d3d8a;box-sizing:border-box"></div>
<div style="left:786.00px;top:706.00px;width:494px;height:1px;background:#23222a"></div>
<div class="t" style="left:715.20px;top:680.83px;font-size:13.6px;line-height:19.04px;color:#e9eefc;"><span style="text-decoration:underline;text-underline-offset:2px;text-decoration-thickness:1px">6119252</span>...</div>
<div class="t" style="left:792.50px;top:680.83px;font-size:13.6px;line-height:19.04px;color:#cfced8;"><span style="display:inline-block;transform:scaleX(1.0549);transform-origin:0 50%">kk-labs/lab-2</span></div>
<div class="t" style="left:990.90px;top:680.83px;font-size:13.6px;line-height:19.04px;color:#cfced8;"><span style="display:inline-block;transform:scaleX(0.9902);transform-origin:0 50%">deploy_ec2</span></div>
<div class="t" style="left:1213.90px;top:680.83px;font-size:13.6px;line-height:19.04px;color:#cfced8;"><span style="display:inline-block;transform:scaleX(1.0145);transform-origin:0 50%">branch</span></div>
<div style="left:709.00px;top:707.00px;width:77px;height:33px;background:linear-gradient(90deg,#2a55c0,#2f62cb);border-bottom:1px solid #1d3d8a;box-sizing:border-box"></div>
<div style="left:786.00px;top:739.00px;width:494px;height:1px;background:#23222a"></div>
<div class="t" style="left:715.20px;top:713.53px;font-size:13.6px;line-height:19.04px;color:#e9eefc;"><span style="text-decoration:underline;text-underline-offset:2px;text-decoration-thickness:1px">6119252</span>...</div>
<div class="t" style="left:792.50px;top:713.53px;font-size:13.6px;line-height:19.04px;color:#cfced8;"><span style="display:inline-block;transform:scaleX(1.0549);transform-origin:0 50%">kk-labs/lab-2</span></div>
<div class="t" style="left:990.90px;top:713.53px;font-size:13.6px;line-height:19.04px;color:#cfced8;"><span style="display:inline-block;transform:scaleX(1.0226);transform-origin:0 50%">build_file</span></div>
<div class="t" style="left:1213.90px;top:713.53px;font-size:13.6px;line-height:19.04px;color:#cfced8;"><span style="display:inline-block;transform:scaleX(1.0145);transform-origin:0 50%">branch</span></div>
<div style="left:984.70px;top:347.10px;width:1px;height:380px;background:#23222a"></div>
<div style="left:1192.00px;top:347.10px;width:1px;height:380px;background:#23222a"></div>
<div style="left:787.00px;top:445.00px;width:198px;height:33px;background:#1f1e27;border:1px solid #2c2b34;box-sizing:border-box"></div>
<div class="t" style="left:792.50px;top:451.93px;font-size:13.6px;line-height:19.04px;color:#cfced8;"><span style="display:inline-block;transform:scaleX(1.0529);transform-origin:0 50%">kk-labs/solutions-lab-2</span></div>
<svg style="left:942.00px;top:455.00px" width="13" height="13" viewBox="0 0 13 13"><circle cx="5.5" cy="5.5" r="4.3" stroke="#c4c3cd" stroke-width="1.2" fill="none"/><path d="M8.6 8.6L11.8 11.8" stroke="#c4c3cd" stroke-width="1.4" stroke-linecap="round"/><path d="M3.4 5.5H7.6M5.5 3.4V7.6" stroke="#c4c3cd" stroke-width="1.1"/></svg>
<svg style="left:962.00px;top:455.00px" width="13" height="13" viewBox="0 0 13 13"><circle cx="5.5" cy="5.5" r="4.3" stroke="#c4c3cd" stroke-width="1.2" fill="none"/><path d="M8.6 8.6L11.8 11.8" stroke="#c4c3cd" stroke-width="1.4" stroke-linecap="round"/><path d="M3.4 5.5H7.6" stroke="#c4c3cd" stroke-width="1.1"/></svg>
<svg style="left:979.00px;top:466.00px" width="18" height="26" viewBox="0 0 18 26"><path d="M1.5 1.5V20L6 15.8L9.2 23.2L12.4 21.8L9.3 14.6H15.2Z" fill="#0b0b0e" stroke="#f2f2f2" stroke-width="1.3" stroke-linejoin="round"/></svg>
</body></html>
